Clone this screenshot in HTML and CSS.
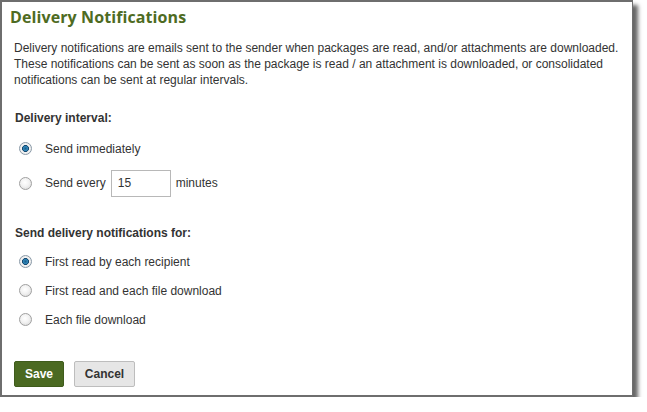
FILE: index.html
```html
<!DOCTYPE html>
<html lang="en">
<head>
    <meta charset="UTF-8">
    <title>Delivery Notifications</title>
    <link rel="stylesheet" href="styles.css">
</head>
<body>
<div class="panel">
    <h1 class="title">Delivery Notifications</h1>
    <p class="intro">Delivery notifications are emails sent to the sender when packages are read, and/or attachments are downloaded.
        These notifications can be sent as soon as the package is read / an attachment is downloaded, or consolidated
        notifications can be sent at regular intervals.</p>

    <div class="group">
        <p class="groupTitle">Delivery interval:</p>
        <label class="option">
            <input type="radio" name="interval" checked>
            <span>Send immediately</span>
        </label>
        <label class="option optionInput">
            <input type="radio" name="interval">
            <span>Send every</span>
            <input type="text" class="minutes" value="15">
            <span>minutes</span>
        </label>
    </div>

    <div class="group groupSecond">
        <p class="groupTitle">Send delivery notifications for:</p>
        <label class="option">
            <input type="radio" name="target" checked>
            <span>First read by each recipient</span>
        </label>
        <label class="option">
            <input type="radio" name="target">
            <span>First read and each file download</span>
        </label>
        <label class="option">
            <input type="radio" name="target">
            <span>Each file download</span>
        </label>
    </div>

    <div class="buttons">
        <button type="button" class="btnSave">Save</button>
        <button type="button" class="btnCancel">Cancel</button>
    </div>
</div>
</body>
</html>
```

FILE: styles.css
```css
body {
    margin: 0;
    background-color: white;
    font-family: "Liberation Sans", Arial, sans-serif;
    font-size: 12px;
    color: #333;
}

.panel {
    box-sizing: border-box;
    width: 633px;
    height: 397px;
    border: 1px solid #6e6e6e;
    border-width: 2px 1px 2px 2px;
    background-color: white;
    box-shadow: 5px 5px 4px rgba(0, 0, 0, 0.6);
    padding: 0 12px;
}

.title {
    margin: 0 0 0 -4px;
    padding-top: 4px;
    font-family: "Open Sans", "DejaVu Sans", sans-serif;
    font-size: 16px;
    letter-spacing: 0.1px;
    line-height: 22px;
    font-weight: bold;
    color: #4e6b22;
}

.intro {
    margin: 12px 0 0 0;
    line-height: 16px;
}

.group {
    margin-top: 22px;
}

.groupSecond {
    margin-top: 22px;
}

.groupTitle {
    margin: 0 0 8px 1px;
    font-weight: bold;
    line-height: 16px;
}

.groupSecond .groupTitle {
    margin-bottom: 6px;
}

.option {
    display: flex;
    align-items: center;
    height: 29px;
    padding-left: 5px;
}

.optionInput {
    height: 40px;
}

.option input[type="radio"] {
    appearance: none;
    -webkit-appearance: none;
    box-sizing: border-box;
    width: 13px;
    height: 13px;
    margin: 0 13px 0 0;
    border: 1px solid #a0a0a0;
    border-radius: 50%;
    background: radial-gradient(circle at 45% 40%, #ffffff 0%, #f2f2f2 45%, #d4d4d4 100%);
}

.option input[type="radio"]:checked {
    border-color: #8a9aa8;
    background: radial-gradient(circle at 50% 50%, #1e5f8e 0%, #2f86b8 28%, #0d3f66 40%, #f4f4f4 48%, #e0e0e0 100%);
}

.minutes {
    box-sizing: border-box;
    width: 60px;
    height: 27px;
    margin: 0 5px 0 5px;
    padding: 0 6px;
    border: 1px solid #b8b8b8;
    font-family: "Liberation Sans", Arial, sans-serif;
    font-size: 12px;
    color: #333;
    outline: none;
}

.buttons {
    display: flex;
    gap: 10px;
    margin-top: 27px;
}

.buttons button {
    box-sizing: border-box;
    height: 26px;
    border-radius: 2px;
    font-family: "Liberation Sans", Arial, sans-serif;
    font-size: 12px;
    font-weight: bold;
}

.btnSave {
    width: 50px;
    border: 1px solid #3f5c1c;
    background-color: #4b6a22;
    color: white;
}

.btnCancel {
    width: 61px;
    border: 1px solid #bdbdbd;
    background-color: #e6e6e6;
    color: #333;
}
```
